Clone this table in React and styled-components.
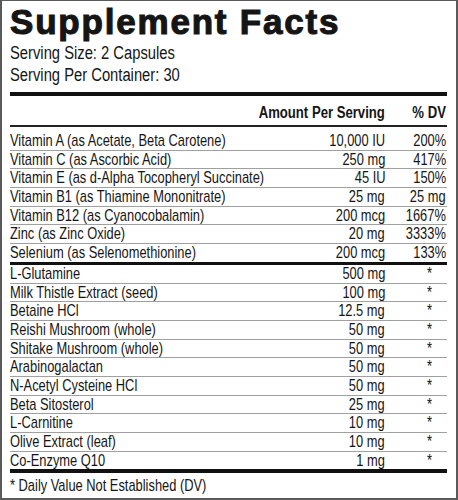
import React from "react";
import styled, { createGlobalStyle } from "styled-components";

const Global = createGlobalStyle`
  html, body { margin: 0; padding: 0; background: #fff; }
  body { font-family: "Liberation Sans", Arial, sans-serif; color: #151515; }
`;

const Panel = styled.div`
  box-sizing: border-box;
  width: 458px;
  height: 500px;
  border: 2px solid #5a5a5a;
  border-width: 1px 2px 2px 2px;
  padding: 1px 9px 0 8px;
  background: #fff;
  display: flex;
  flex-direction: column;
`;

const Title = styled.h1`
  margin: 0;
  font-family: "Liberation Sans", Arial, sans-serif;
  font-weight: 700;
  font-size: 35px;
  line-height: 40px;
  letter-spacing: 1.8px;
  -webkit-text-stroke: 1.1px #151515;
  color: #151515;
  white-space: nowrap;
`;

/* Condensed text: Liberation Sans narrowed to Arial Narrow proportions */
const Cond = styled.span`
  display: inline-block;
  white-space: nowrap;
  transform: scaleX(0.82);
  transform-origin: ${(p) => (p.$right ? "right" : "left")} center;
`;

const ServingLine = styled.div`
  font-size: 18px;
  line-height: 22px;
  white-space: nowrap;
`;

const Bar = styled.div`
  height: ${(p) => p.$h}px;
  background: #111;
  margin-top: ${(p) => p.$mt || 0}px;
  flex: none;
`;

const Row = styled.div`
  display: flex;
  align-items: baseline;
  font-size: 15.7px;
  line-height: 17.7px;
  height: 17.7px;
  white-space: nowrap;
  border-bottom: 1px solid #a0a0a0;
  margin-top: ${(p) => p.$mt || 0}px;
  &:last-child { border-bottom: none; }
`;

const HeaderRow = styled(Row)`
  font-weight: 700;
  font-size: 16px;
  line-height: 20px;
  height: 20px;
  padding: 7px 0 2px;
  border-bottom: 2px solid #222;
  &:last-child { border-bottom: 2px solid #222; }
`;

const Name = styled.span`
  flex: 1;
  min-width: 0;
  overflow: visible;
`;

const Amount = styled.span`
  flex: none;
  text-align: right;
`;

const DV = styled.span`
  flex: none;
  width: 62px;
  box-sizing: border-box;
  text-align: right;
  padding-right: ${(p) => (p.$star ? 15 : 1)}px;
`;

const Group = styled.div`
  display: flex;
  flex-direction: column;
`;

const Footnote = styled.div`
  font-size: 15.7px;
  line-height: 17.7px;
  padding-top: 4px;
  white-space: nowrap;
`;

const vitamins = [
  ["Vitamin A (as Acetate, Beta Carotene)", "10,000 IU", "200%"],
  ["Vitamin C (as Ascorbic Acid)", "250 mg", "417%"],
  ["Vitamin E (as d-Alpha Tocopheryl Succinate)", "45 IU", "150%"],
  ["Vitamin B1 (as Thiamine Mononitrate)", "25 mg", "25 mg"],
  ["Vitamin B12 (as Cyanocobalamin)", "200 mcg", "1667%"],
  ["Zinc (as Zinc Oxide)", "20 mg", "3333%"],
  ["Selenium (as Selenomethionine)", "200 mcg", "133%"],
];

const others = [
  ["L-Glutamine", "500 mg"],
  ["Milk Thistle Extract (seed)", "100 mg"],
  ["Betaine HCl", "12.5 mg"],
  ["Reishi Mushroom (whole)", "50 mg"],
  ["Shitake Mushroom (whole)", "50 mg"],
  ["Arabinogalactan", "50 mg"],
  ["N-Acetyl Cysteine HCl", "50 mg"],
  ["Beta Sitosterol", "25 mg"],
  ["L-Carnitine", "10 mg"],
  ["Olive Extract (leaf)", "10 mg"],
  ["Co-Enzyme Q10", "1 mg"],
];

export default function App() {
  return (
    <>
      <Global />
      <Panel>
        <Title>Supplement Facts</Title>
        <ServingLine><Cond>Serving Size: 2 Capsules</Cond></ServingLine>
        <ServingLine><Cond>Serving Per Container: 30</Cond></ServingLine>
        <Bar $h={4} $mt={6} />
        <HeaderRow>
          <Name />
          <Amount><Cond $right>Amount Per Serving</Cond></Amount>
          <DV><Cond $right>% DV</Cond></DV>
        </HeaderRow>
        <Group>
          {vitamins.map(([n, a, d], i) => (
            <Row key={n} $mt={i === 0 ? 5 : 0}>
              <Name><Cond>{n}</Cond></Name>
              <Amount><Cond $right>{a}</Cond></Amount>
              <DV><Cond $right>{d}</Cond></DV>
            </Row>
          ))}
        </Group>
        <Bar $h={3} />
        <Group>
          {others.map(([n, a]) => (
            <Row key={n}>
              <Name><Cond>{n}</Cond></Name>
              <Amount><Cond $right>{a}</Cond></Amount>
              <DV $star><Cond $right>*</Cond></DV>
            </Row>
          ))}
        </Group>
        <Bar $h={4} />
        <Footnote><Cond>* Daily Value Not Established (DV)</Cond></Footnote>
      </Panel>
    </>
  );
}
